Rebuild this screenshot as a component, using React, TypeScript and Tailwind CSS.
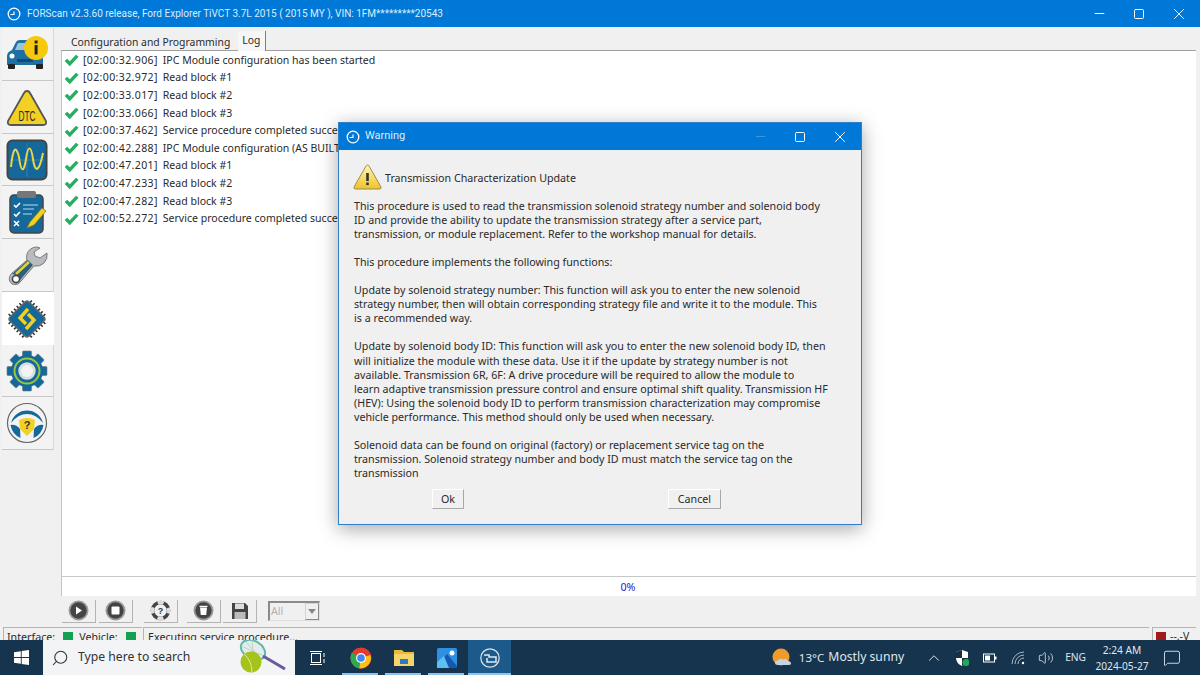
import { Minus, Square, X, Search, ChevronUp, Volume2, MessageSquare } from 'lucide-react'

const logLines = [
  ['[02:00:32.906]', 'IPC Module configuration has been started'],
  ['[02:00:32.972]', 'Read block #1'],
  ['[02:00:33.017]', 'Read block #2'],
  ['[02:00:33.066]', 'Read block #3'],
  ['[02:00:37.462]', 'Service procedure completed succe'],
  ['[02:00:42.288]', 'IPC Module configuration (AS BUILT'],
  ['[02:00:47.201]', 'Read block #1'],
  ['[02:00:47.233]', 'Read block #2'],
  ['[02:00:47.282]', 'Read block #3'],
  ['[02:00:52.272]', 'Service procedure completed succe'],
]

function ForscanMark({ size = 14 }: { size?: number }) {
  return (
    <svg width={size} height={size} viewBox="0 0 14 14" fill="none">
      <circle cx="7" cy="7" r="5.8" stroke="white" strokeWidth="1.3" />
      <path d="M3.5 7.5 L7 7.5 L7 4.5" stroke="white" strokeWidth="1.2" />
    </svg>
  )
}

function Check() {
  return (
    <svg width="15" height="13" viewBox="0 0 14 12" className="shrink-0">
      <path d="M0.6 6.5 L3 4.4 L5.4 6.6 L11.2 0.6 L13.6 2.6 L5.4 11.4 Z" fill="#27ae60" />
    </svg>
  )
}

function WindowButtons({ faded }: { faded?: boolean }) {
  return (
    <div className="ml-auto flex items-center text-white mr-px">
      <div className={`w-[40px] flex justify-center ${faded ? 'text-[#3f94dc]' : ''}`}><Minus size={15} strokeWidth={1.6} /></div>
      <div className="w-[40px] flex justify-center"><Square size={12} strokeWidth={2} /></div>
      <div className="w-[40px] flex justify-center"><X size={18} strokeWidth={1.3} /></div>
    </div>
  )
}

function InfoCar() {
  return (
    <svg width="44" height="36" viewBox="0 0 44 36" className="-ml-[2px]">
      <path d="M7 14 L11 6 Q12 4 15 4 L28 4 L34 14 Q38 16 38 20 L38 29 L2 29 L2 20 Q2 16 7 14Z" fill="#1f6fa5" />
      <path d="M10 14 L13 7 L26 7 L30 14Z" fill="#9cc4dc" />
      <rect x="3" y="28" width="7" height="5" rx="1" fill="#222" />
      <rect x="31" y="28" width="7" height="5" rx="1" fill="#222" />
      <circle cx="7" cy="20" r="2.5" fill="#fff" />
      <circle cx="33" cy="20" r="2.5" fill="#fff" />
      <rect x="12" y="23" width="16" height="3" fill="#124a72" />
      <circle cx="31" cy="12" r="12" fill="#f6c90e" />
      <rect x="29.6" y="4.5" width="3" height="3" fill="#222" />
      <rect x="29.6" y="9" width="3" height="9.5" fill="#222" />
    </svg>
  )
}

function DtcIcon() {
  return (
    <svg width="42" height="38" viewBox="0 0 42 38" className="-ml-[2px] mt-[1px]">
      <path d="M21 2 Q23 2 24 4 L40 32 Q41 36 37 36 L5 36 Q1 36 2 32 L18 4 Q19 2 21 2Z" fill="#f2d024" stroke="#555" strokeWidth="1.8" />
      <text x="21" y="32" textAnchor="middle" fontSize="14" fill="#2a2a2a" fontFamily="'Liberation Sans',sans-serif" textLength="17" lengthAdjust="spacingAndGlyphs">DTC</text>
    </svg>
  )
}

function ScopeIcon() {
  return (
    <svg width="42" height="42" viewBox="0 0 42 42" className="-ml-[2px]">
      <rect x="1.5" y="1.5" width="39" height="39" rx="5" fill="#14699a" stroke="#444" strokeWidth="2" />
      <path d="M21 4 V38 M4 21 H38" stroke="#3d86b0" strokeWidth="0.8" />
      <path d="M5 28 C7 8 10 6 13 18 C15 34 18 34 20 20 C22 6 25 6 27 20 C29 34 33 34 37 14" stroke="#e9d44a" strokeWidth="2" fill="none" />
    </svg>
  )
}

function ChecklistIcon() {
  return (
    <svg width="40" height="44" viewBox="0 0 40 44">
      <rect x="2" y="5" width="33" height="38" rx="4" fill="#14699a" stroke="#444" strokeWidth="1.5" />
      <rect x="9" y="1" width="19" height="7" rx="2" fill="#777" />
      <path d="M6 15 l2 2 l4 -4 M6 24 l2 2 l4 -4 M6 31 l5 5 M11 31 l-5 5" stroke="#fff" strokeWidth="1.6" fill="none" />
      <path d="M15 15 H30 M15 19 H26 M15 24 H24" stroke="#7fb5d6" strokeWidth="1.4" />
      <path d="M19 38 L22 32 L34 18 L38 21 L26 35Z" fill="#f2d024" stroke="#8a7a10" strokeWidth="0.8" />
    </svg>
  )
}

function WrenchIcon() {
  return (
    <svg width="42" height="42" viewBox="0 0 42 42">
      <path d="M29 3 Q22 4 20 10 Q19 14 20 16 L4 30 Q0 36 5 40 Q11 42 14 37 L27 22 Q33 23 37 19 Q41 15 40 9 L33 14 L28 12 L27 8 L33 4 Q31 3 29 3Z" fill="#b9bcbf" stroke="#666" strokeWidth="0.8" />
      <path d="M5 30 L21 16 L26 21 L13 36 Q11 30 5 30Z" fill="#2f5f7a" />
      <path d="M9 30 L22 18" stroke="#e4d232" strokeWidth="2.6" />
      <circle cx="9" cy="35" r="3.6" fill="#fff" stroke="#444" strokeWidth="1.6" />
    </svg>
  )
}

function ChipIcon() {
  const pins = [0, 1, 2, 3, 4, 5]
  return (
    <svg width="44" height="44" viewBox="0 0 44 44" className="-ml-[2px]">
      <g transform="rotate(45 22 22)">
        {pins.map((i) => (
          <g key={i} stroke="#2c2c2c" strokeWidth="1.5">
            <path d={`M${12.5 + i * 3.8} 5.5 V9`} />
            <path d={`M${12.5 + i * 3.8} 35 V38.5`} />
            <path d={`M5.5 ${12.5 + i * 3.8} H9`} />
            <path d={`M35 ${12.5 + i * 3.8} H38.5`} />
          </g>
        ))}
        <rect x="8.5" y="8.5" width="27" height="27" rx="3" fill="#14699a" stroke="#6a6a6a" strokeWidth="1.4" />
      </g>
      <path d="M23 12 L15 21 L21 27 M21 32 L29 23 L23 17" stroke="#f2d024" strokeWidth="3.4" fill="none" />
    </svg>
  )
}

function GearIcon() {
  const teeth = [0, 45, 90, 135, 180, 225, 270, 315]
  return (
    <svg width="42" height="42" viewBox="0 0 42 42" className="-ml-[2px]">
      {teeth.map((a) => (
        <rect key={a} x="16.5" y="1" width="9" height="9" rx="1" fill="#14699a" stroke="#777" strokeWidth="0.6" transform={`rotate(${a} 21 21)`} />
      ))}
      <circle cx="21" cy="21" r="16" fill="#14699a" />
      <circle cx="21" cy="21" r="12.5" fill="none" stroke="#9cc43c" strokeWidth="2" />
      <circle cx="21" cy="21" r="9.5" fill="#d8dee2" stroke="#14699a" strokeWidth="1.6" />
      <circle cx="21" cy="21" r="6" fill="#f3f3f3" />
    </svg>
  )
}

function WheelIcon() {
  return (
    <svg width="42" height="42" viewBox="0 0 42 42" className="-ml-[2px]">
      <circle cx="21" cy="21" r="19.5" fill="#f3f3f3" stroke="#666" strokeWidth="1.2" />
      <path d="M5 21 A16.5 16.5 0 0 1 37 21 Q30 12 21 12 Q12 12 5 21Z" fill="#14699a" />
      <path d="M4.5 23 Q10 22 14 27 L14.5 36 A17 17 0 0 1 4.5 23Z" fill="#14699a" />
      <path d="M37.5 23 Q32 22 28 27 L27.5 36 A17 17 0 0 0 37.5 23Z" fill="#14699a" />
      <path d="M13 18 Q21 14 29 18 L28 27 L21 34 L14 27Z" fill="#f2d024" />
      <text x="21" y="27" textAnchor="middle" fontSize="11" fontWeight="700" fill="#333" fontFamily="'Liberation Sans',sans-serif">?</text>
    </svg>
  )
}

function SideButton({ children, active, h }: { children: React.ReactNode; active?: boolean; h: string }) {
  return (
    <div className={`${h} w-[52px] flex items-center justify-center ${active ? 'bg-white' : 'bg-[#f3f3f3] border-b border-[#c8c8c8] border-r border-r-[#d8d8d8]'}`}>
      {children}
    </div>
  )
}

function ToolButton({ children }: { children: React.ReactNode }) {
  return (
    <div className="w-[34px] h-[23px] bg-[#f0f0f0] border-r border-b border-[#b4b4b4] flex items-center justify-center">
      {children}
    </div>
  )
}

function RoundDark({ children }: { children: React.ReactNode }) {
  return (
    <svg width="21" height="21" viewBox="0 0 21 21">
      <circle cx="10.5" cy="10.5" r="10" fill="#9a9a9a" />
      <circle cx="10.5" cy="10.5" r="8.2" fill="#444" />
      {children}
    </svg>
  )
}

const dialogParagraphs = [
  ['This procedure is used to read the transmission solenoid strategy number and solenoid body', 'ID and provide the ability to update the transmission strategy after a service part,', 'transmission, or module replacement. Refer to the workshop manual for details.'],
  ['This procedure implements the following functions:'],
  ['Update by solenoid strategy number: This function will ask you to enter the new solenoid', 'strategy number, then will obtain corresponding strategy file and write it to the module. This', 'is a recommended way.'],
  ['Update by solenoid body ID: This function will ask you to enter the new solenoid body ID, then', 'will initialize the module with these data. Use it if the update by strategy number is not', 'available. Transmission 6R, 6F: A drive procedure will be required to allow the module to', 'learn adaptive transmission pressure control and ensure optimal shift quality. Transmission HF', '(HEV): Using the solenoid body ID to perform transmission characterization may compromise', 'vehicle performance. This method should only be used when necessary.'],
  ['Solenoid data can be found on original (factory) or replacement service tag on the', 'transmission. Solenoid strategy number and body ID must match the service tag on the', 'transmission'],
]

function TaskIcon({ children, active, running }: { children: React.ReactNode; active?: boolean; running?: boolean }) {
  return (
    <div className={`relative w-[43px] h-full flex items-center justify-center ${active ? 'bg-[#1c5a8c]' : ''}`}>
      {children}
      {running && <div className={`absolute bottom-0 h-[2px] bg-[#8cc4ee] ${active ? 'left-0 right-0' : 'left-[3px] right-[4px]'}`} />}
    </div>
  )
}

export default function App() {
  return (
    <div className="relative w-[1200px] h-[675px] overflow-hidden flex flex-col bg-[#f0f0f0] text-[#2a2a2a] text-[10.7px] font-['Noto_Sans',sans-serif]">
      {/* title bar */}
      <div className="h-[27px] shrink-0 bg-[#0078d7] text-[#dcecf9] flex items-center pl-[7px]">
        <ForscanMark />
        <span className="ml-[6px] text-[10px] font-['Roboto',sans-serif] whitespace-nowrap">FORScan v2.3.60 release, Ford Explorer TiVCT 3.7L 2015 ( 2015 MY ), VIN: 1FM*********20543</span>
        <WindowButtons />
      </div>

      <div className="flex-1 flex min-h-0">
        {/* left tool strip */}
        <div className="w-[61px] shrink-0 pl-[2px] pt-[1px] flex flex-col">
          <SideButton h="h-[53px]"><InfoCar /></SideButton>
          <SideButton h="h-[53px]"><DtcIcon /></SideButton>
          <SideButton h="h-[52px]"><ScopeIcon /></SideButton>
          <SideButton h="h-[53px]"><ChecklistIcon /></SideButton>
          <SideButton h="h-[53px]"><WrenchIcon /></SideButton>
          <SideButton h="h-[53px]" active><ChipIcon /></SideButton>
          <SideButton h="h-[52px]"><GearIcon /></SideButton>
          <SideButton h="h-[53px]"><WheelIcon /></SideButton>
        </div>

        <div className="flex-1 flex flex-col min-w-0 mr-[4px]">
          {/* tabs */}
          <div className="h-[24px] shrink-0 flex items-end pl-[6px] text-[10.4px] border-b border-[#a0a0a0]">
            <div className="h-[14px] pl-[4px] pr-[8px] flex items-center whitespace-nowrap">Configuration and Programming</div>
            <div className="h-[20px] -mb-px pl-[4px] pr-[5px] bg-[#f6f6f6] border-r border-[#808080] flex items-center">Log</div>
          </div>

          {/* log */}
          <div className="h-[526px] shrink-0 bg-white border-l border-[#c4c4c4] pl-[2px] pt-[1px] border-b border-b-[#c8c8c8] text-[10.55px]">
            {logLines.map(([time, msg], i) => (
              <div key={i} className="h-[17.6px] flex items-center gap-[4px] whitespace-nowrap">
                <Check />
                <span className="tracking-[0.36px] mr-px">{time}</span>
                <span>{msg}</span>
              </div>
            ))}
          </div>

          {/* progress */}
          <div className="h-[19px] shrink-0 bg-white border-l border-[#c4c4c4] flex items-center justify-center text-[#1a1ad0] pr-[2px] pt-[2px]">0%</div>

          {/* toolbar */}
          <div className="h-[30px] shrink-0 flex items-center pl-px">
            <ToolButton>
              <RoundDark><path d="M8 6.5 L14 10.5 L8 14.5Z" fill="#fff" /></RoundDark>
            </ToolButton>
            <div className="w-[3px]" />
            <ToolButton>
              <RoundDark><rect x="6.5" y="6.5" width="8" height="8" rx="1" fill="#fff" /></RoundDark>
            </ToolButton>
            <div className="w-[11px]" />
            <ToolButton>
              <svg width="21" height="21" viewBox="0 0 21 21">
                <circle cx="10.5" cy="10.5" r="8" fill="none" stroke="#444" strokeWidth="3.6" />
                <circle cx="10.5" cy="10.5" r="8" fill="none" stroke="#ddd" strokeWidth="3.6" strokeDasharray="6 6.57" strokeDashoffset="3" />
                <text x="10.5" y="14" textAnchor="middle" fontSize="9" fontWeight="700" fill="#333" fontFamily="'Liberation Sans',sans-serif">?</text>
              </svg>
            </ToolButton>
            <div className="w-[9px]" />
            <ToolButton>
              <RoundDark>
                <path d="M7 7.5 H14 L13.2 15 H7.8Z" fill="#fff" />
                <rect x="6.5" y="5.8" width="8" height="1.2" fill="#fff" />
              </RoundDark>
            </ToolButton>
            <div className="w-[2px]" />
            <ToolButton>
              <svg width="18" height="18" viewBox="0 0 18 18">
                <path d="M1 1 H14 L17 4 V17 H1Z" fill="#444" />
                <rect x="4" y="1.5" width="9" height="5.5" fill="#ddd" />
                <rect x="3.5" y="10" width="11" height="7" fill="#bbb" />
              </svg>
            </ToolButton>
            <div className="w-[11px]" />
            <div className="w-[52px] h-[20px] bg-[#f0f0f0] border-l-2 border-t-2 border-[#8a8a8a] border-r border-b border-r-[#dedede] border-b-[#dedede] flex items-center justify-between pl-[1px] text-[#b0b0b0]">
              All
              <div className="w-[14px] h-full border border-[#d4d4d4] border-b-[#8a8a8a] border-r-[#8a8a8a] flex items-center justify-center">
                <div className="w-0 h-0 border-l-[4px] border-r-[4px] border-t-[5px] border-l-transparent border-r-transparent border-t-[#888]" />
              </div>
            </div>
          </div>
        </div>
      </div>

      {/* status bar, clipped by the taskbar */}
      <div className="absolute left-0 right-0 top-[627px] h-[14px] flex items-start whitespace-nowrap">
        <div className="ml-[3px] w-[139px] h-full border-t border-l border-[#b4b4b4] flex items-center pl-[3px] pt-[5px]">
          Interface:
          <span className="ml-[8px] w-[10px] h-[10px] bg-[#12a150]" />
          <span className="ml-[6px]">Vehicle:</span>
          <span className="ml-[8px] w-[10px] h-[10px] bg-[#12a150]" />
        </div>
        <div className="ml-[1px] flex-1 h-full border-t border-l border-[#b4b4b4] flex items-center pl-[4px] pt-[5px]">Executing service procedure...</div>
        <div className="mr-[4px] ml-[3px] w-[44px] h-full border-t border-l border-[#b4b4b4] flex items-center pl-[3px] pt-[5px]">
          <span className="w-[10px] h-[10px] bg-[#a01c1c]" />
          <span className="ml-[4px] text-[10.5px]">--.-V</span>
        </div>
      </div>

      {/* warning dialog */}
      <div className="absolute left-[338px] top-[122px] w-[524px] h-[403px] bg-[#f0f0f0] border border-[#2f80c8] shadow-[0_4px_18px_rgba(0,0,0,0.35)] flex flex-col">
        <div className="h-[27px] shrink-0 bg-[#0078d7] text-[#dcecf9] flex items-center pl-[7px] font-['Roboto',sans-serif] text-[11px]">
          <ForscanMark />
          <span className="ml-[5px]">Warning</span>
          <WindowButtons faded />
        </div>
        <div className="flex items-center pl-[14px] pt-[14px]">
          <svg width="29" height="26" viewBox="0 0 29 26">
            <defs>
              <linearGradient id="warnFill" x1="0" y1="0" x2="0" y2="1">
                <stop offset="0" stopColor="#fff7b8" />
                <stop offset="1" stopColor="#f0c420" />
              </linearGradient>
            </defs>
            <path d="M14.5 1 Q15.5 1 16 2 L28 23 Q28.5 25 26.5 25 L2.5 25 Q0.5 25 1 23 L13 2 Q13.5 1 14.5 1Z" fill="url(#warnFill)" stroke="#9a8a55" strokeWidth="1" />
            <rect x="13.2" y="9" width="2.6" height="8" fill="#333" />
            <rect x="13.2" y="18.5" width="2.6" height="2.6" fill="#333" />
          </svg>
          <span className="ml-[3px] mt-[2px]">Transmission Characterization Update</span>
        </div>
        <div className="pl-[15px] mt-[9px] leading-[14.07px] whitespace-nowrap flex flex-col gap-[14px]">
          {dialogParagraphs.map((lines) => (
            <div key={lines[0]}>
              {lines.map((l) => <div key={l}>{l}</div>)}
            </div>
          ))}
        </div>
        <div className="relative mt-[9px] h-[20px]">
          <div className="absolute left-[93px] w-[32px] h-[20px] bg-[#f0f0f0] border-r border-b border-[#a8a8a8] border-t border-l border-t-white border-l-white flex items-center justify-center">Ok</div>
          <div className="absolute left-[329px] w-[53px] h-[20px] bg-[#f0f0f0] border-r border-b border-[#a8a8a8] border-t border-l border-t-white border-l-white flex items-center justify-center">Cancel</div>
        </div>
      </div>

      {/* windows taskbar */}
      <div className="absolute left-0 right-0 bottom-0 h-[35px] bg-[#17344e] flex items-center text-[#dfe7ee]">
        <div className="w-[43px] flex justify-center">
          <svg width="15" height="15" viewBox="0 0 15 15" fill="white">
            <path d="M0 2.2 L6.8 1.2 V7 H0Z M7.7 1.1 L15 0 V7 H7.7Z M0 8 H6.8 V13.8 L0 12.8Z M7.7 8 H15 V15 L7.7 13.9Z" />
          </svg>
        </div>
        <div className="relative w-[252px] h-full bg-[#f2f4f5] flex items-center pl-[8px] text-[#333] text-[12.2px]">
          <Search size={18} strokeWidth={1.4} className="-scale-x-100" />
          <span className="ml-[9px]">Type here to search</span>
          <svg width="50" height="34" viewBox="0 0 50 34" className="absolute left-[195px] top-0">
            <ellipse cx="15" cy="10" rx="13" ry="9" fill="#e4ecea" stroke="#5fb8b0" strokeWidth="2" transform="rotate(30 15 10)" />
            <path d="M3 6 L26 16 M8 2 L24 20 M14 0 L16 22" stroke="#b8c4c2" strokeWidth="0.7" />
            <path d="M25 16 L47 29" stroke="#6a5a9c" strokeWidth="3" />
            <circle cx="13" cy="22" r="10.5" fill="#a4c41c" />
            <path d="M6 14 Q14 21 14 32" stroke="#e4ec8c" strokeWidth="1" fill="none" />
          </svg>
        </div>
        <div className="w-[42px] flex justify-center ml-[2px]">
          <svg width="16" height="14" viewBox="0 0 16 14" fill="none" stroke="#fff" strokeWidth="1">
            <rect x="1.5" y="2.5" width="9" height="9" />
            <path d="M0 0.5 H12 M0 13.5 H12 M14 2 V6 M14 8 V12" />
          </svg>
        </div>
        <TaskIcon running>
          <svg width="22" height="22" viewBox="0 0 22 22">
            <circle cx="11" cy="11" r="10.5" fill="#e33b2e" />
            <path d="M11 11 L20.5 8 A10.5 10.5 0 0 1 9 21.3Z" fill="#fbc116" />
            <path d="M11 11 L9 21.3 A10.5 10.5 0 0 1 2 5.5Z" fill="#2da94f" />
            <circle cx="11" cy="11" r="5" fill="#fff" />
            <circle cx="11" cy="11" r="3.8" fill="#4285f4" />
          </svg>
        </TaskIcon>
        <TaskIcon running>
          <svg width="20" height="17" viewBox="0 0 20 17">
            <path d="M0 1 H8 L10 3 H20 V17 H0Z" fill="#e8b93c" />
            <rect x="0" y="5" width="20" height="12" fill="#f5d46a" />
            <rect x="6" y="10" width="8" height="5" fill="#2a7ac4" />
          </svg>
        </TaskIcon>
        <TaskIcon running>
          <svg width="20" height="20" viewBox="0 0 20 20">
            <rect width="20" height="20" rx="1.5" fill="#2f8fe0" />
            <path d="M0 18 L10 6 L20 18 V20 H0Z" fill="#1659b0" />
            <path d="M0 14 L7 8 L12 20 H0Z" fill="#5cc0f2" />
            <circle cx="15" cy="5" r="2.5" fill="#fff" />
          </svg>
        </TaskIcon>
        <TaskIcon active running>
          <svg width="20" height="20" viewBox="0 0 20 20" fill="none">
            <circle cx="10" cy="10" r="9.2" stroke="#dfe7ee" strokeWidth="1.2" />
            <path d="M4 7 H9 V9 H16 V14 H7 V10" stroke="#dfe7ee" strokeWidth="1.5" />
          </svg>
        </TaskIcon>

        <div className="ml-auto flex items-center h-full">
          <svg width="20" height="20" viewBox="0 0 20 20">
            <circle cx="9" cy="9" r="8.5" fill="#ee9a2c" />
            <path d="M6 17 Q3 17 3 14.5 Q3 12.5 6 12.5 Q8 9.5 11 11.5 Q15 10 16 13 Q19 13.5 19 15.5 Q19 17 16.5 17Z" fill="#c8d4e2" />
          </svg>
          <span className="ml-[7px] text-[11.6px]">13°C</span>
          <span className="ml-[4px] text-[12.2px]">Mostly sunny</span>
          <ChevronUp size={18} strokeWidth={1.3} className="ml-[21px]" />
          <svg width="14" height="16" viewBox="0 0 14 16" className="ml-[12px]">
            <path d="M7 0 L13 2 V8 Q13 13 7 16 Q1 13 1 8 V2Z" fill="#fff" />
            <path d="M7 0 L7 8 H1 V2Z M7 8 H13 Q13 13 7 16Z" fill="#1b2f40" />
            <circle cx="11" cy="12.5" r="3.5" fill="#1ea85a" />
          </svg>
          <svg width="14" height="10" viewBox="0 0 14 10" fill="none" className="ml-[14px]">
            <rect x="0.5" y="1" width="11" height="8" stroke="#fff" />
            <rect x="2" y="2.5" width="5" height="5" fill="#fff" />
            <rect x="12" y="3.5" width="1.5" height="3" fill="#fff" />
          </svg>
          <svg width="15" height="14" viewBox="0 0 15 14" fill="none" stroke="#aab6c0" strokeWidth="1" className="ml-[14px]">
            <path d="M1 13 A12 12 0 0 1 13 1 M4 13 A9 9 0 0 1 13 4 M7 13 A6 6 0 0 1 13 7" />
            <circle cx="12" cy="12" r="1.2" fill="#fff" stroke="none" />
          </svg>
          <Volume2 size={16} strokeWidth={1.2} className="ml-[12px]" />
          <span className="ml-[11px] text-[10.2px]">ENG</span>
          <div className="ml-[10px] w-[52px] flex flex-col items-center text-[10.2px] leading-[16px]">
            <span>2:24 AM</span>
            <span className="whitespace-nowrap">2024-05-27</span>
          </div>
          <MessageSquare size={18} strokeWidth={1.2} className="ml-[15px] mr-[19px]" />
        </div>
      </div>
    </div>
  )
}
